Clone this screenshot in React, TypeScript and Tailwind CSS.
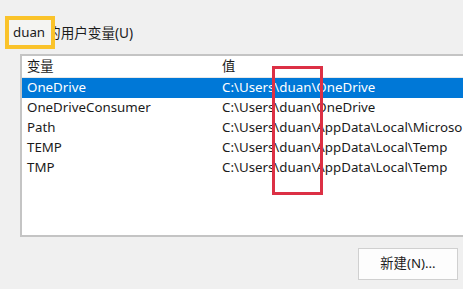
const rows = [
  { name: "OneDrive", value: "C:\\Users\\duan\\OneDrive" },
  { name: "OneDriveConsumer", value: "C:\\Users\\duan\\OneDrive" },
  { name: "Path", value: "C:\\Users\\duan\\AppData\\Local\\Microso" },
  { name: "TEMP", value: "C:\\Users\\duan\\AppData\\Local\\Temp" },
  { name: "TMP", value: "C:\\Users\\duan\\AppData\\Local\\Temp" },
];

export default function App() {
  return (
    <div
      className="relative w-[463px] h-[289px] overflow-hidden bg-[#f0f0f0] text-[13.3px] text-[#1b1b1b]"
      style={{ fontFamily: '"Noto Sans", "Noto Sans CJK SC", sans-serif' }}
    >
      {/* label */}
      <div className="relative flex h-[54px] items-center pl-[13px] pt-[12px]">
        <span className="relative z-20 leading-none">duan</span>
        <span className="relative z-0 ml-[2px] text-[13.6px] leading-none">的用户变量(U)</span>
        <div className="absolute left-[5px] top-[16px] z-10 h-[33px] w-[50px] border-[4px] border-[#fac32a] bg-[#f4f4f2]" />
      </div>

      {/* list */}
      <div className="relative ml-[20px] w-[443px] h-[183px] border-y-2 border-l-2 border-[#c4c4c4] bg-white overflow-hidden">
        <div className="flex h-[22px] items-center border-b border-[#e8e8e8]">
          <div className="w-[199px] shrink-0 pl-[5px]">变量</div>
          <div className="pl-[1px]">值</div>
        </div>
        {rows.map((r, i) => (
          <div
            key={r.name}
            className={
              i === 0
                ? "flex h-[20px] items-center whitespace-nowrap bg-[#0078d7] text-white"
                : "flex h-[20px] items-center whitespace-nowrap"
            }
          >
            <div className="w-[199px] shrink-0 pl-[5px]">{r.name}</div>
            <div className="pl-[1px]">{r.value}</div>
          </div>
        ))}
        <div className="absolute left-[250px] top-[10px] h-[129px] w-[51px] border-[3px] border-[#dc3045]" />
      </div>

      {/* button */}
      <div className="flex justify-end pr-[5px] pt-[11px]">
        <button className="h-[32px] w-[100px] border border-[#d0d0d0] bg-[#fdfdfd] text-[13.3px] text-[#1b1b1b]">
          新建(N)...
        </button>
      </div>
    </div>
  );
}
